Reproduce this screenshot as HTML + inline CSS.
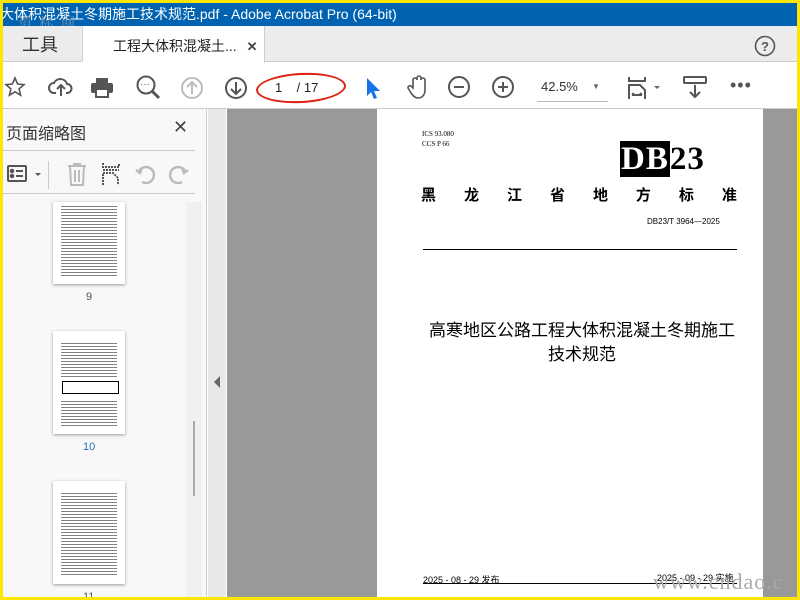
<!DOCTYPE html>
<html><head><meta charset="utf-8"><style>
*{margin:0;padding:0;box-sizing:border-box}
body{width:800px;height:600px;overflow:hidden;background:#ffe600;position:relative;font-family:"Liberation Sans","Noto Sans CJK SC",sans-serif}
.a{position:absolute}
.ico{position:absolute;fill:none;stroke:#555;stroke-width:2}
.txt{position:absolute;left:8px;right:8px;background:repeating-linear-gradient(#fff 0,#fff 2px,#555 2px,#555 3px);opacity:.75}
</style></head><body>
<div class="a" style="left:3px;top:3px;width:794px;height:594px;background:#fff;overflow:hidden">
 <div class="a" style="left:-3px;top:0;width:797px;height:23px;background:#0063b1;color:#fff;font-size:14px;line-height:22px">大体积混凝土冬期施工技术规范.pdf - Adobe Acrobat Pro (64-bit)</div>
 <div class="a" style="left:15px;top:10px;color:#8a9bb0;font-family:'Liberation Serif','Noto Serif CJK SC',serif;font-size:14px;letter-spacing:2px;opacity:.8">道 标 网</div>
 <div class="a" style="left:0;top:23px;width:794px;height:36px;background:#ececec;border-bottom:1px solid #ccc"></div>
 <div class="a" style="left:0;top:23px;width:80px;height:36px;border-right:1px solid #d5d5d5;font-size:18px;color:#333;line-height:38px;padding-left:19px">工具</div>
 <div class="a" style="left:80px;top:23px;width:182px;height:37px;background:#fff;border-right:1px solid #ccc;font-size:14px;color:#222;line-height:40px;padding-left:30px">工程大体积混凝土... <span style="margin-left:6px;font-weight:bold;font-size:13px;color:#444">✕</span></div>
 <svg class="ico" style="left:751px;top:32px" width="22" height="22"><circle cx="11" cy="11" r="9.5" stroke="#555" stroke-width="1.6"/><text x="7" y="16" font-size="13" fill="#555" stroke="none" font-weight="bold">?</text></svg>
 <div class="a" style="left:0;top:105px;width:794px;height:1px;background:#ccc"></div>
 <svg class="ico" style="left:0;top:72px" width="24" height="24"><path d="M12 3l2.6 6 6.4.6-4.9 4.3 1.5 6.3L12 16.8 6.4 20.2l1.5-6.3L3 9.6l6.4-.6z" stroke-width="1.6"/></svg>
 <svg class="ico" style="left:45px;top:72px" width="26" height="24"><path d="M8 18H6a5 5 0 0 1 0-10 7 7 0 0 1 13 1 4.5 4.5 0 0 1 0 9h-1M13 21V11M9 14l4-4 4 4"/></svg>
 <svg class="ico" style="left:86px;top:72px" width="26" height="24"><rect x="7" y="3" width="12" height="5" fill="#555" stroke="none"/><rect x="2" y="8" width="22" height="10" rx="2" fill="#555" stroke="none"/><rect x="7" y="14" width="12" height="8" fill="#fff" stroke="#555"/></svg>
 <svg class="ico" style="left:132px;top:71px" width="28" height="28"><circle cx="11" cy="11" r="8.5"/><path d="M17 17l7 7" stroke-width="3"/><text x="5" y="13" font-size="10" fill="#555" stroke="none">···</text></svg>
 <svg class="ico" style="left:176px;top:72px" width="26" height="26"><circle cx="13" cy="13" r="10" stroke="#bbb"/><path d="M13 19V7M8 12l5-5 5 5" stroke="#bbb"/></svg>
 <svg class="ico" style="left:220px;top:72px" width="26" height="26"><circle cx="13" cy="13" r="10"/><path d="M13 7v12M8 14l5 5 5-5"/></svg>
 <div class="a" style="left:253px;top:70px;width:90px;height:30px;border:2.5px solid #d21;border-radius:50%/50%;transform:rotate(-3deg)"></div>
 <div class="a" style="left:272px;top:77px;font-size:13px;color:#222">1&nbsp;&nbsp;&nbsp;&nbsp;/ 17</div>
 <svg class="a" style="left:361px;top:73px" width="18" height="24"><path d="M3 2v18l4-4 3 7 3-1-3-7h6z" fill="#1473e6"/></svg>
 <svg class="ico" style="left:403px;top:71px" width="24" height="26"><path d="M7 14V6a2 2 0 0 1 4 0V4a2 2 0 0 1 4 0v2a2 2 0 0 1 4 0v10c0 5-3 8-7 8-3 0-5-2-7-5l-3-5a2 2 0 0 1 3-2z" stroke-width="1.6"/></svg>
 <svg class="ico" style="left:444px;top:72px" width="24" height="24"><circle cx="12" cy="12" r="10"/><path d="M7 12h10"/></svg>
 <svg class="ico" style="left:488px;top:72px" width="24" height="24"><circle cx="12" cy="12" r="10"/><path d="M7 12h10M12 7v10"/></svg>
 <div class="a" style="left:534px;top:76px;width:71px;height:23px;border-bottom:1px solid #bbb;font-size:13px;color:#333;padding-left:4px">42.5%<span style="position:absolute;left:55px;top:3px;font-size:8px;color:#666">▼</span></div>
 <svg class="ico" style="left:624px;top:72px" width="36" height="26"><path d="M2 2v4h16V2M2 24V10h11l5 5v9M5 20h10M5 20l2-2M15 20l-2-2"/><path d="M27 11l3 3 3-3z" fill="#666" stroke="none"/></svg>
 <svg class="ico" style="left:679px;top:72px" width="26" height="26"><rect x="2" y="2" width="22" height="6" rx="1"/><path d="M13 10v12M8 17l5 5 5-5"/></svg>
 <div class="a" style="left:727px;top:72px;font-size:18px;color:#555;letter-spacing:1px">•••</div>
 <div class="a" style="left:0;top:106px;width:204px;height:488px;background:#f8f8f8;border-right:1px solid #ccc"></div>
 <div class="a" style="left:3px;top:117px;font-size:16px;color:#333">页面缩略图</div>
 <div class="a" style="left:170px;top:114px;font-size:18px;color:#444">✕</div>
 <div class="a" style="left:0;top:147px;width:192px;height:1px;background:#ccc"></div>
 <div class="a" style="left:0;top:190px;width:192px;height:1px;background:#ccc"></div>
 <svg class="ico" style="left:3px;top:160px" width="40" height="22"><rect x="2" y="3" width="18" height="15" rx="1"/><circle cx="6" cy="8" r="1.3" fill="#555"/><circle cx="6" cy="13" r="1.3" fill="#555"/><path d="M10 8h7M10 13h7"/><path d="M29 10l3 3 3-3z" fill="#555" stroke="none"/></svg>
 <div class="a" style="left:45px;top:158px;width:1px;height:28px;background:#ccc"></div>
 <svg class="ico" style="left:62px;top:158px" width="24" height="26"><path d="M3 5h18M9 5V3h6v2M5 5l1 19h12l1-19M10 9v12M14 9v12" stroke="#bbb"/></svg>
 <svg class="ico" style="left:97px;top:158px" width="24" height="26"><path d="M3 2v4h16V2M3 24V12h10l5 5v7M3 9h16" stroke-dasharray="2 1"/></svg>
 <svg class="ico" style="left:131px;top:159px" width="24" height="24"><path d="M8 20A8 8 0 1 0 5 9M2 8l4 3 2-5" stroke="#bbb" stroke-width="2.4"/></svg>
 <svg class="ico" style="left:163px;top:159px" width="24" height="24"><path d="M16 20A8 8 0 1 1 19 9M22 8l-4 3-2-5" stroke="#bbb" stroke-width="2.4"/></svg>
 <div class="a" style="left:183px;top:199px;width:16px;height:395px;background:#f0f0f0"></div>
 <div class="a" style="left:190px;top:418px;width:2px;height:75px;background:#aaa"></div>
 <div class="a" style="left:50px;top:199px;width:72px;height:82px;background:#fff;box-shadow:0 1px 3px #999"><div class="txt" style="top:2px;height:74px"></div></div>
 <div class="a" style="left:83px;top:288px;font-size:11px;color:#555">9</div>
 <div class="a" style="left:50px;top:328px;width:72px;height:103px;background:#fff;box-shadow:0 1px 3px #999"><div class="txt" style="top:10px;height:36px"></div><div class="a" style="left:9px;top:50px;width:57px;height:13px;border:1px solid #000"></div><div class="txt" style="top:68px;height:28px"></div></div>
 <div class="a" style="left:80px;top:438px;font-size:11px;color:#2b6cb0">10</div>
 <div class="a" style="left:50px;top:478px;width:72px;height:103px;background:#fff;box-shadow:0 1px 3px #999"><div class="txt" style="top:10px;height:85px"></div></div>
 <div class="a" style="left:80px;top:588px;font-size:11px;color:#555">11</div>
 <div class="a" style="left:205px;top:106px;width:18px;height:488px;background:#e8e8e8"></div>
 <div class="a" style="left:211px;top:373px;width:0;height:0;border-top:6px solid transparent;border-bottom:6px solid transparent;border-right:6px solid #666"></div>
 <div class="a" style="left:224px;top:106px;width:570px;height:488px;background:#999"></div>
 <div class="a" style="left:374px;top:106px;width:386px;height:488px;background:#fff;color:#000">
  <div class="a" style="left:45px;top:20px;font-size:7px;line-height:10px;font-family:'Liberation Serif',serif">ICS 93.080<br>CCS P 66</div>
  <div class="a" style="left:243px;top:34px;font-size:33px;font-weight:bold;font-family:'Liberation Serif',serif;letter-spacing:1px;line-height:32px"><span style="background:#000;color:#fff;padding:0 1px">DB</span>23</div>
  <div class="a" style="left:44px;top:75px;width:316px;font-size:15px;font-weight:bold;display:flex;justify-content:space-between"><span>黑</span><span>龙</span><span>江</span><span>省</span><span>地</span><span>方</span><span>标</span><span>准</span></div>
  <div class="a" style="left:270px;top:108px;font-size:8px">DB23/T 3964—2025</div>
  <div class="a" style="left:46px;top:140px;width:314px;height:1px;background:#000"></div>
  <div class="a" style="left:0;top:210px;width:410px;text-align:center;font-size:17px;line-height:24px">高寒地区公路工程大体积混凝土冬期施工<br>技术规范</div>
  <div class="a" style="left:46px;top:464px;font-size:9px">2025 - 08 - 29 发布</div>
  <div class="a" style="left:280px;top:462px;font-size:9px">2025 - 09 - 29 实施</div>
  <div class="a" style="left:46px;top:474px;width:314px;height:1px;background:#000"></div>
 </div>
 <div class="a" style="left:650px;top:566px;font-size:22px;color:#aaa;font-family:'Liberation Serif',serif;letter-spacing:1px">www.cndao.c</div>
</div>
</body></html>
